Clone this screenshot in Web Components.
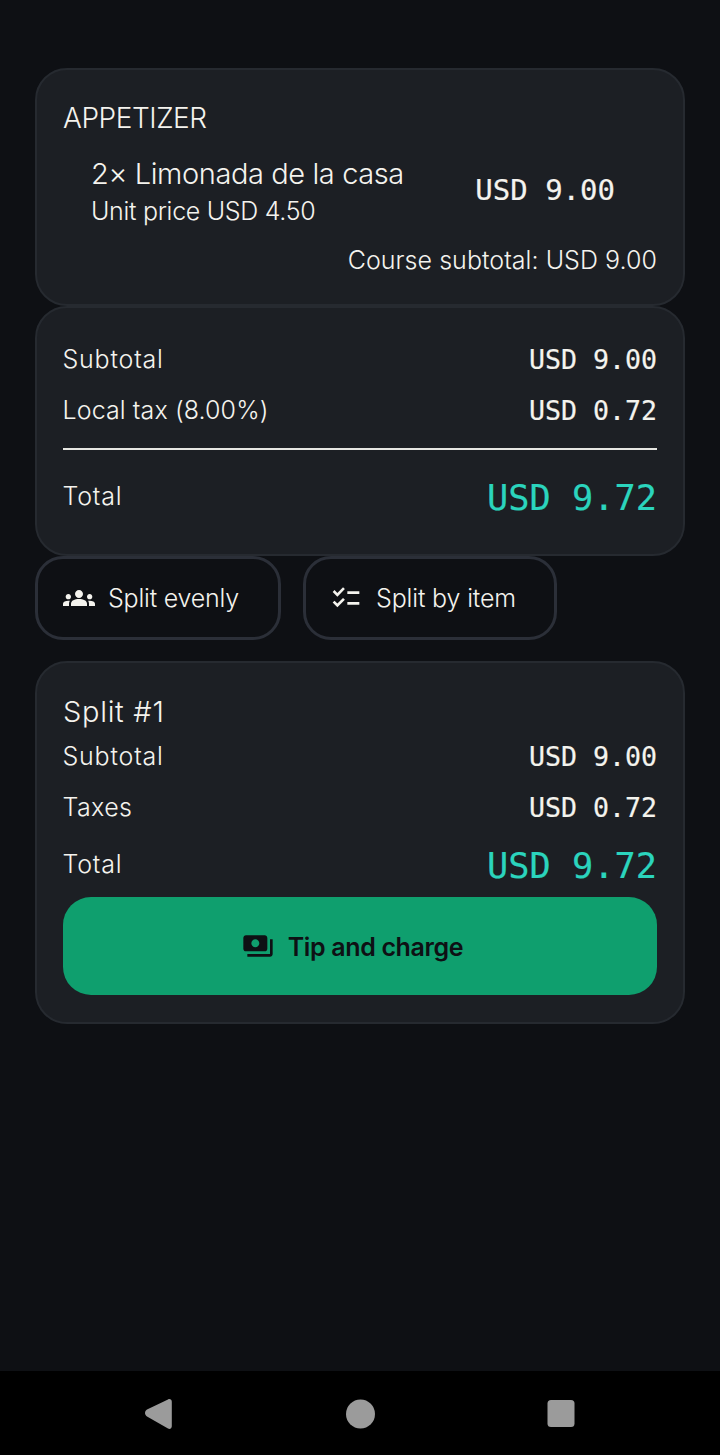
<!DOCTYPE html>
<html>
<head>
<meta charset="utf-8">
<title>Split check</title>
<style>
  html, body { margin: 0; padding: 0; background: #0e1014; }
  body { font-family: "Inter", "Liberation Sans", sans-serif; font-weight: 300; color: #f4f3ee; }
</style>
</head>
<body>
<check-page>
  <check-card style="--pad-top: 29px; --pad-bottom: 27px">
    <check-title size="28" height="38" track="-0.45">APPETIZER</check-title>
    <check-item name="2× Limonada de la casa" unit="Unit price USD 4.50" price="USD 9.00"></check-item>
    <check-note>Course subtotal: USD 9.00</check-note>
  </check-card>

  <check-card style="--pad-top: 26px; --pad-bottom: 31px">
    <check-row label="Subtotal" track="0.8" value="USD 9.00"></check-row>
    <check-row label="Local tax (8.00%)" track="0.1" value="USD 0.72"></check-row>
    <check-divider></check-divider>
    <check-row label="Total" track="0.8" value="USD 9.72" total></check-row>
  </check-card>

  <split-actions>
    <split-button icon="groups" track="-0.2" style="--w: 246px; --left: 25px; --gap: 13px">Split evenly</split-button>
    <split-button icon="checklist" track="-0.15" style="--w: 254px; --left: 24px; --gap: 14px">Split by item</split-button>
  </split-actions>

  <check-card style="--pad-top: 30px; --pad-bottom: 27px">
    <check-title size="29" height="38" track="0.7">Split #1</check-title>
    <check-row label="Subtotal" track="0.8" value="USD 9.00"></check-row>
    <check-row label="Taxes" track="0.4" value="USD 0.72"></check-row>
    <check-row label="Total" track="0.8" value="USD 9.72" total compact></check-row>
    <charge-button>Tip and charge</charge-button>
  </check-card>
</check-page>

<script>
const icons = {
  groups: '<path d="M12 12.75c1.63 0 3.07.39 4.24.9 1.08.48 1.76 1.56 1.76 2.73V18H6v-1.61c0-1.18.68-2.26 1.76-2.73 1.17-.52 2.61-.91 4.24-.91zM4 13c1.1 0 2-.9 2-2s-.9-2-2-2-2 .9-2 2 .9 2 2 2zm1.13 1.1c-.37-.06-.74-.1-1.13-.1-.99 0-1.93.21-2.78.58C.48 14.9 0 15.62 0 16.43V18h4.5v-1.61c0-.83.23-1.61.63-2.29zM20 13c1.1 0 2-.9 2-2s-.9-2-2-2-2 .9-2 2 .9 2 2 2zm4 3.43c0-.81-.48-1.53-1.22-1.85-.85-.37-1.79-.58-2.78-.58-.39 0-.76.04-1.13.1.4.68.63 1.46.63 2.29V18H24v-1.57zM12 6c1.66 0 3 1.34 3 3s-1.34 3-3 3-3-1.34-3-3 1.34-3 3-3z"/>',
  checklist: '<path d="M22 7h-9v2h9V7zm0 8h-9v2h9v-2zM5.54 11 2 7.46l1.41-1.41 2.12 2.12 4.24-4.24 1.41 1.41L5.54 11zm0 8L2 15.46l1.41-1.41 2.12 2.12 4.24-4.24 1.41 1.41L5.54 19z"/>',
  payments: '<path d="M19 14V6c0-1.1-.9-2-2-2H3c-1.1 0-2 .9-2 2v8c0 1.1.9 2 2 2h14c1.1 0 2-.9 2-2zm-9-1c-1.66 0-3-1.34-3-3s1.34-3 3-3 3 1.34 3 3-1.34 3-3 3zm13-6v11c0 1.1-.9 2-2 2H4v-2h17V7h2z"/>'
};

const monoStyle = `font-family: "DejaVu Sans Mono", "Liberation Mono", monospace; font-weight: 400; -webkit-text-stroke: 0.2px currentColor;`;

class CheckPage extends HTMLElement {
  constructor() {
    super();
    this.attachShadow({mode: 'open'}).innerHTML = `
      <style>
        :host { display: flex; flex-direction: column; height: 1455px; }
        main { flex: 1; display: flex; flex-direction: column; padding: 68px 35px 0; }
        nav { height: 84px; background: #000; display: flex; align-items: center; justify-content: center; }
        nav svg { display: block; }
      </style>
      <main><slot></slot></main>
      <nav>
        <svg width="720" height="84" viewBox="0 0 720 84" fill="#9b9b9b">
          <path d="M147 38.6 168 28.4c2-.9 3.8.3 3.8 2.4v24.4c0 2.1-1.8 3.3-3.8 2.4L147 45.4c-2.6-1.4-2.6-5.4 0-6.8z"/>
          <circle cx="360.5" cy="43" r="14.5"/>
          <rect x="547.5" y="29" width="27" height="27" rx="3.5"/>
        </svg>
      </nav>
    `;
  }
}
customElements.define('check-page', CheckPage);

class CheckCard extends HTMLElement {
  constructor() {
    super();
    this.attachShadow({mode: 'open'}).innerHTML = `
      <style>
        :host {
          display: block;
          background: #1c1f24;
          border: 2px solid #262a30;
          border-radius: 32px;
          padding: var(--pad-top) 26px var(--pad-bottom);
        }
      </style>
      <slot></slot>
    `;
  }
}
customElements.define('check-card', CheckCard);

class CheckTitle extends HTMLElement {
  connectedCallback() {
    const size = this.getAttribute('size');
    const height = this.getAttribute('height');
    const track = this.getAttribute('track');
    this.attachShadow({mode: 'open'}).innerHTML = `
      <style>
        :host { display: block; font-size: ${size}px; line-height: ${height}px; letter-spacing: ${track}px; }
      </style>
      <slot></slot>
    `;
  }
}
customElements.define('check-title', CheckTitle);

class CheckItem extends HTMLElement {
  connectedCallback() {
    this.attachShadow({mode: 'open'}).innerHTML = `
      <style>
        :host { display: flex; align-items: center; justify-content: space-between; padding: 17px 42px 0 28px; }
        .name { font-size: 29px; line-height: 40px; letter-spacing: -0.4px; }
        .unit { font-size: 25px; line-height: 34px; letter-spacing: -0.3px; }
        .price { ${monoStyle} font-size: 29px; line-height: 40px; margin-bottom: 2px; }
      </style>
      <div>
        <div class="name">${this.getAttribute('name')}</div>
        <div class="unit">${this.getAttribute('unit')}</div>
      </div>
      <div class="price">${this.getAttribute('price')}</div>
    `;
  }
}
customElements.define('check-item', CheckItem);

class CheckNote extends HTMLElement {
  constructor() {
    super();
    this.attachShadow({mode: 'open'}).innerHTML = `
      <style>
        :host { display: block; text-align: right; font-size: 25px; line-height: 34px; letter-spacing: 0.05px; margin-top: 15px; }
      </style>
      <slot></slot>
    `;
  }
}
customElements.define('check-note', CheckNote);

class CheckRow extends HTMLElement {
  connectedCallback() {
    const total = this.hasAttribute('total');
    const compact = this.hasAttribute('compact');
    this.attachShadow({mode: 'open'}).innerHTML = `
      <style>
        :host { display: flex; align-items: center; justify-content: space-between; height: ${total ? (compact ? 64 : 52) : 51}px; }
        .label { font-size: 25px; letter-spacing: ${this.getAttribute('track')}px; margin: 0 0 2px -0.5px; }
        .value { ${monoStyle} font-size: ${total ? 35.3 : 26.6}px; color: ${total ? '#2bd4bd' : 'inherit'}; }
      </style>
      <span class="label">${this.getAttribute('label')}</span>
      <span class="value">${this.getAttribute('value')}</span>
    `;
  }
}
customElements.define('check-row', CheckRow);

class CheckDivider extends HTMLElement {
  constructor() {
    super();
    this.attachShadow({mode: 'open'}).innerHTML = `
      <style>
        :host { display: block; height: 2px; background: #e6e6e2; margin: 12px 0 21px; }
      </style>
    `;
  }
}
customElements.define('check-divider', CheckDivider);

class SplitActions extends HTMLElement {
  constructor() {
    super();
    this.attachShadow({mode: 'open'}).innerHTML = `
      <style>
        :host { display: flex; gap: 22px; margin-bottom: 21px; }
      </style>
      <slot></slot>
    `;
  }
}
customElements.define('split-actions', SplitActions);

class SplitButton extends HTMLElement {
  connectedCallback() {
    this.attachShadow({mode: 'open'}).innerHTML = `
      <style>
        :host {
          display: flex; align-items: center; gap: var(--gap); box-sizing: border-box;
          width: var(--w); height: 84px; padding-left: var(--left);
          border: 3px solid #2b2f38; border-radius: 28px;
          font-size: 25px; letter-spacing: ${this.getAttribute('track')}px;
        }
        svg { width: 32px; height: 32px; fill: currentColor; flex: none; }
      </style>
      <svg viewBox="0 0 24 24">${icons[this.getAttribute('icon')]}</svg>
      <span><slot></slot></span>
    `;
  }
}
customElements.define('split-button', SplitButton);

class ChargeButton extends HTMLElement {
  constructor() {
    super();
    this.attachShadow({mode: 'open'}).innerHTML = `
      <style>
        :host {
          display: flex; align-items: center; justify-content: center; gap: 14px;
          height: 98px; padding-right: 15px; border-radius: 28px;
          background: #0f9f6e; color: #0e1014;
          font-size: 25px; font-weight: 600; letter-spacing: -0.35px;
        }
        span { padding-top: 2px; }
        svg { width: 32px; height: 32px; fill: currentColor; flex: none; }
      </style>
      <svg viewBox="0 0 24 24">${icons.payments}</svg>
      <span><slot></slot></span>
    `;
  }
}
customElements.define('charge-button', ChargeButton);
</script>
</body>
</html>
